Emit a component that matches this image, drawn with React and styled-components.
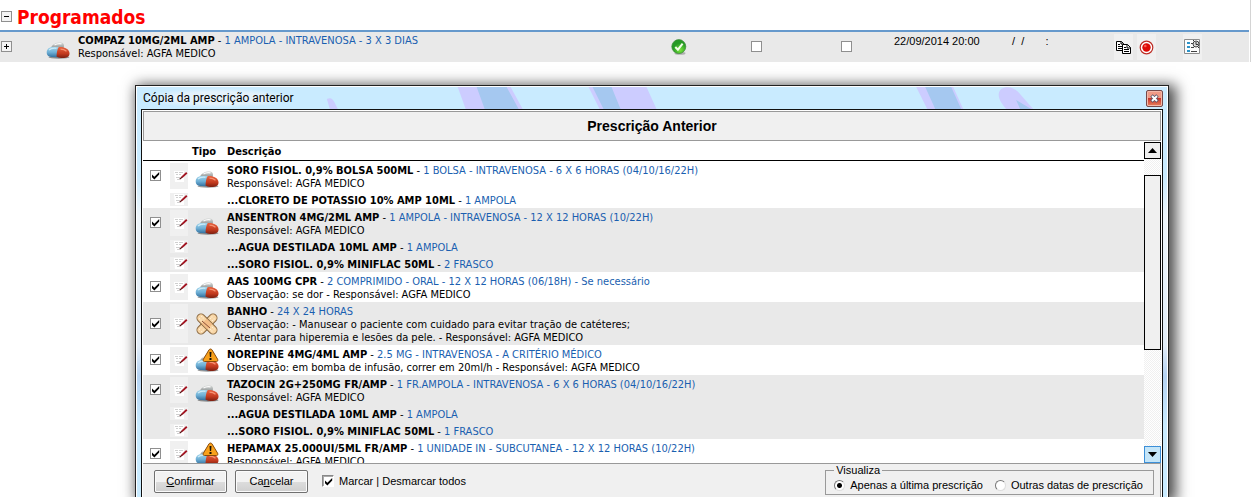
import React, { useState } from 'react';
import styled, { createGlobalStyle, css } from 'styled-components';

const tahoma = '"DejaVu Sans Condensed", "DejaVu Sans", sans-serif';
const msSans = '"Liberation Sans", Arial, sans-serif';
const blue = '#1a5fb0';
const stripe = '#e9e9e9';
const face = '#f0f0f0';

const GlobalStyle = createGlobalStyle`
  * { box-sizing: border-box; }
  body { margin: 0; background: #fff; color: #000; font: 11px/13px ${tahoma}; }
  button, input { margin: 0; padding: 0; font: inherit; color: inherit; }
  svg { display: block; flex: none; }
`;

/* ---------- shared controls ---------- */

const tick = encodeURIComponent(
  '<svg xmlns="http://www.w3.org/2000/svg" viewBox="0 0 9 9"><path d="M1 3.6v2.6l2.4 2.3L8.2 3.5V1L3.4 5.8z"/></svg>'
);

const Check = styled.input.attrs({ type: 'checkbox' })`
  appearance: none;
  display: block;
  flex: none;
  width: ${(p) => (p.$sunken ? 12 : 11)}px;
  height: ${(p) => (p.$sunken ? 12 : 11)}px;
  margin-bottom: 1px;
  background: #fff center / 9px 9px no-repeat;
  border: 1px solid #8f8f8f;
  ${(p) => p.$sunken && css`border-color: #888 #fff #fff #888; box-shadow: inset 1px 1px #aaa;`}
  &:checked { background-image: url("data:image/svg+xml,${tick}"); }
`;

const Radio = styled.input.attrs({ type: 'radio' })`
  appearance: none;
  display: block;
  flex: none;
  width: 11px;
  height: 11px;
  border-radius: 50%;
  border: 1px solid;
  border-color: #777 #ddd #ddd #777;
  background: #fff;
  &:checked { background: radial-gradient(circle, #000 2px, #fff 3px); }
`;

const IconButton = styled.button`
  display: flex;
  align-items: center;
  justify-content: center;
  flex: none;
  width: ${(p) => p.$width || 18}px;
  height: ${(p) => p.$height || 26}px;
  border: 0;
  background: ${face};
`;

/* ---------- icons ---------- */

const Pills = ({ alert }) => (
  <svg width="24" height="24" viewBox="0 0 24 24" aria-hidden="true">
    <defs>
      <linearGradient id="pillBlue" x1="0" y1="0" x2="0" y2="1"><stop offset="0" stopColor="#9fd3ea" /><stop offset=".5" stopColor="#6fb0d6" /><stop offset="1" stopColor="#2f6d9c" /></linearGradient>
      <linearGradient id="pillRed" x1="0" y1="0" x2="0" y2="1"><stop offset="0" stopColor="#e8623f" /><stop offset=".6" stopColor="#c23a1e" /><stop offset="1" stopColor="#7d1f10" /></linearGradient>
      <linearGradient id="pillGrey" x1="0" y1="0" x2="0" y2="1"><stop offset="0" stopColor="#dcdedd" /><stop offset="1" stopColor="#858b8b" /></linearGradient>
    </defs>
    <ellipse cx="13" cy="22.300" rx="10.500" ry="1.500" fill="#000" opacity=".4" />
    <path d="M5 13.500c0-3 4-5.500 8-6.200 3-.5 5.200.9 5 3.700l-.5 3H6z" fill="url(#pillGrey)" />
    <path d="M8.500 10c2-1.300 4.500-1.800 7-1.200" stroke="#fafafa" strokeWidth="1.300" fill="none" />
    <path d="M13 12H6.500C3 12 .7 14.500.7 17.400S3 22 6.500 22l6.500.5z" fill="url(#pillBlue)" />
    <path d="M12.500 12.200c5-.7 11 1.500 11 6.300 0 3.500-3.500 4.500-6.500 4.500-2.500 0-4.800-.5-6.500-1.500.2-3.500.5-6.500 2-9.300z" fill="url(#pillRed)" />
    <path d="M3 15c1.500-1.500 4-2 7.500-1.700" stroke="#cdeaf6" strokeWidth="1.300" fill="none" />
    <path d="M14.500 14.200c2.500 0 4.500.8 6 2" stroke="#f79272" strokeWidth="1.200" fill="none" />
    {alert && (
      <g>
        <path d="M15.500 1c.7 0 1.200.4 1.600 1l5.500 9.200c.7 1.200.2 2.300-1.200 2.300H9.600c-1.400 0-1.900-1.100-1.200-2.300L13.900 2c.4-.6.9-1 1.600-1z" fill="#f9a11b" stroke="#8a4b0a" />
        <path d="M14.500 4h2l-.4 5h-1.200zM14.500 10h2v2h-2z" fill="#1a1205" />
      </g>
    )}
  </svg>
);

const Bandage = () => (
  <svg width="24" height="24" viewBox="0 0 24 24" aria-hidden="true">
    {[-45, 45].map((angle) => (
      <g key={angle} transform={`rotate(${angle} 12 12)`}>
        <rect x="-.5" y="8" width="25" height="8" rx="4" fill="#f8d6a6" stroke="#8a6840" />
        <rect x="8" y="8.500" width="8" height="7" fill="#f3bd86" />
        <path d="M2.500 10.500h4M2.500 13.500h4M18 10.500h4M18 13.500h4" stroke="#fff5e2" strokeDasharray="1 1" />
      </g>
    ))}
    <path d="M7 9l8 7" stroke="#8a5038" />
  </svg>
);

const EditNote = () => (
  <svg width="18" height="13" viewBox="0 0 18 13" aria-hidden="true">
    <path d="M4 1h10v11H5z" fill="#fff" />
    <path d="M5 2.500h3m1 0h4M6 4.500h2m1 0h2M6 7.500h4M7 9.500h3" stroke="#cfcfcf" />
    <path d="M16.800 2.800l-5 4.600" stroke="#a31421" strokeWidth="1.900" />
    <path d="M12 7.200l-2.200 1.800" stroke="#5c1518" strokeWidth="1.300" />
  </svg>
);

const Approved = () => (
  <svg width="16" height="16" viewBox="0 0 16 16" role="img" aria-label="Aprovado">
    <defs><radialGradient id="ok" cx=".6" cy=".75"><stop offset="0" stopColor="#79e63c" /><stop offset="1" stopColor="#269a25" /></radialGradient></defs>
    <ellipse cx="9" cy="14.300" rx="5.500" ry="1.500" fill="#888" opacity=".6" />
    <circle cx="7.800" cy="7.600" r="7" fill="url(#ok)" stroke="#3b8a35" strokeWidth=".7" />
    <path d="M4.300 8l2.600 2.700 4.700-6" fill="none" stroke="#f3ffe9" strokeWidth="2" />
  </svg>
);

const Copy = () => (
  <svg width="17" height="15" viewBox="0 0 17 15" aria-hidden="true" fill="#fff" stroke="#000">
    <path d="M1.500 1.500h5l2 2v7h-7zM6 1.500v2.500h2.500" />
    <path d="M3 4.500h2M3 6.500h4M3 8.500h4" />
    <path d="M7.500 4.500h5l3 3v6h-8zM12 4.500v3.500h3.500" />
    <path d="M9 7.500h2M9 9.500h5M9 11.500h5" />
  </svg>
);

const Record = () => (
  <svg width="15" height="15" viewBox="0 0 15 15" aria-hidden="true">
    <circle cx="7.500" cy="7.500" r="6.300" fill="#fff" stroke="#bd2a22" strokeWidth="1.200" />
    <circle cx="7.500" cy="7.500" r="4.200" fill="#dd0a05" />
    <circle cx="6.300" cy="6" r="1.300" fill="#fa5a50" />
  </svg>
);

const Schedule = () => (
  <svg width="17" height="16" viewBox="0 0 17 16" aria-hidden="true">
    <path d="M.5.500h15v14H.5z" fill="#fdfdfd" stroke="#8c8c8c" />
    <path d="M3 3h3v2H3zM3 7h3v2H3zM3 11h3v2H3z" fill="#2d93c8" />
    <path d="M7 4.500h2M7 8.500h3M7 12.500h6" stroke="#444" />
    <circle cx="12" cy="5" r="3" fill="#ddd" stroke="#444" />
    <path d="M12 3v2.500h2M9 2l1-1M14 8l1 1" stroke="#333" fill="none" />
  </svg>
);

const CloseMark = () => (
  <svg width="9" height="9" viewBox="0 0 9 9" aria-hidden="true">
    <path d="M1.500 1.500l6 6M7.500 1.500l-6 6" stroke="#545469" strokeWidth="3.400" />
    <path d="M2 2l5 5M7 2l-5 5" stroke="#fff" strokeWidth="1.900" />
  </svg>
);

const Arrow = ({ down }) => (
  <svg width="9" height="5" viewBox="0 0 9 5" aria-hidden="true">
    <path d={down ? 'M0 0h9L4.500 5z' : 'M0 5h9L4.500 0z'} />
  </svg>
);

/* ---------- programmed items ---------- */

const Page = styled.main`
  overflow: hidden;
`;

const Programmed = styled.section`
  margin-right: 4px;
  padding-right: 1px;
  border-right: 1px solid #d4d4d4;
`;

const Heading = styled.header`
  display: flex;
  align-items: center;
  gap: 5px;
  padding: 5px 0 1px 1px;
  border-bottom: 2px solid #6699cc;
`;

const HeadingText = styled.h1`
  margin: 0;
  font-size: 19px;
  line-height: 24px;
  color: #f00;
`;

const Toggle = styled.button`
  display: grid;
  place-items: center;
  width: 11px;
  height: 11px;
  margin-bottom: 1px;
  border: 1px solid #8f8f8f;
  background: #f4f4f4;
`;

const Sign = ({ plus }) => (
  <svg width="5" height="5" viewBox="0 0 5 5" aria-hidden="true" stroke="#000">
    <path d={plus ? 'M0 2.500h5M2.500 0v5' : 'M0 2.500h5'} />
  </svg>
);

const ItemRow = styled.div`
  display: grid;
  grid-template-columns: 46px 32px minmax(0, 1fr) 66px 89px 91px 118px 104px 46px 89px;
  align-items: center;
  height: 30px;
  background: ${stripe};
`;

const Cell = styled.div`
  display: flex;
  align-items: center;
  gap: 4px;
  justify-content: ${(p) => (p.$center ? 'center' : 'flex-start')};
  padding-left: ${(p) => p.$indent || 0}px;
`;

const DateText = styled.span`
  align-self: start;
  padding: 3px 0 0 2px;
  font-family: ${msSans};
  white-space: pre;
`;

const Title = styled.strong``;

const Dose = styled.span`
  color: ${blue};
`;

/* ---------- dialog ---------- */

const Stage = styled.div`
  padding: 23px 86px 0 135px;
  overflow: hidden;
`;

const Dialog = styled.section`
  border: 1px solid #222;
  border-bottom: 0;
  padding: 0 1px;
  background: linear-gradient(#c9ebff 90px, #eef5fa 130px, #e2edf8 260px, #b5d3f3 290px, #c9ebff 340px);
  box-shadow: inset 0 1px #fff, inset -1px 0 #fff, inset 1px 0 #fff, 4px 3px 13px 3px rgba(0, 0, 0, 0.7);
`;

const TitleBar = styled.header`
  position: relative;
  display: flex;
  align-items: center;
  justify-content: space-between;
  height: 22px;
  margin-top: 1px;
  padding: 0 4px 0 6px;
  overflow: hidden;
`;

const Streaks = styled.svg`
  position: absolute;
  inset: 0;
  width: 100%;
  height: 100%;
`;

const Caption = styled.h2`
  position: relative;
  margin: 0;
  font: 12px/20px Roboto, "Open Sans", sans-serif;
  background: radial-gradient(closest-side, #e4f2fb 60%, transparent);
`;

const CloseButton = styled.button`
  position: relative;
  display: grid;
  place-items: center;
  width: 17px;
  height: 17px;
  border: 1px solid #75494a;
  border-radius: 2px;
  box-shadow: inset 0 0 0 1px #f3b9aa;
  background: linear-gradient(#f09a86 45%, #c5352b 50%, #e8805c);
`;

const Client = styled.div`
  margin: 0 4px;
  padding: 1px 1px 0;
  border: 1px solid #111;
  border-bottom: 0;
  background: #fff;
`;

const Banner = styled.h3`
  margin: 0;
  border: 1px solid #999;
  background: ${face};
  font: bold 14px/28px ${msSans};
  text-align: center;
`;

const Viewport = styled.div`
  display: flex;
  height: 322px;
`;

const Scrolled = styled.div`
  flex: 1;
  min-width: 0;
  overflow: hidden;
`;

const Table = styled.table`
  width: 100%;
  table-layout: fixed;
  border-spacing: 0;
`;

const HeadCell = styled.th`
  height: 20px;
  width: ${(p) => (p.$width ? `${p.$width}px` : 'auto')};
  padding: 4px 0 2px ${(p) => p.$indent || 0}px;
  border-bottom: 1px solid #000;
  text-align: left;
`;

const Row = styled.tr`
  background: ${(p) => (p.$shaded ? stripe : '#fff')};
`;

const DataCell = styled.td`
  padding: 2px 0;
  vertical-align: middle;
  & > * { margin-left: auto; margin-right: auto; }
`;

const TextCell = styled.td`
  padding: 3px 0 1px 3px;
  white-space: nowrap;
`;

const ScrollBar = styled.div`
  display: flex;
  flex-direction: column;
  width: 17px;
  margin-top: 1px;
  background: repeating-conic-gradient(#fff 0 25%, #f0f0f0 0 50%) 0 0 / 2px 2px;
`;

const ScrollButton = styled.button`
  display: grid;
  place-items: center;
  height: 17px;
  border: 1px solid ${(p) => (p.$active ? '#3c8fd8' : '#000')};
  background: ${(p) => (p.$active ? '#c4e5f8' : face)};
`;

const Track = styled.div`
  flex: 1;
  padding-top: 16px;
`;

const Thumb = styled.div`
  height: 175px;
  border: 1px solid #000;
  background: ${face};
`;

const Footer = styled.footer`
  display: flex;
  align-items: flex-start;
  justify-content: space-between;
  padding: 0 6px 2px 11px;
  border-top: 1px solid #999;
  border-right: 1px solid #999;
  background: ${face};
  font: 11px/13px ${msSans};
`;

const Actions = styled.div`
  display: flex;
  align-items: center;
  gap: 8px;
  padding-top: 6px;
`;

const PushButton = styled.button`
  width: 73px;
  height: 23px;
  border: 1px solid #707070;
  border-radius: 2px;
  box-shadow: inset 0 0 0 1px #fbfbfb;
  background: linear-gradient(#f2f2f2 50%, #dddddd 50%, #cfcfcf);
`;

const Option = styled.label`
  display: flex;
  align-items: center;
  gap: 5px;
`;

const AllOption = styled(Option)`
  margin-left: 6px;
`;

const ViewGroup = styled.fieldset`
  display: flex;
  align-items: center;
  gap: 12px;
  height: 31px;
  margin: 0;
  padding: 0 10px 0 8px;
  border: 1px solid #999;
`;

const Legend = styled.legend`
  padding: 0 2px;
  line-height: 12px;
`;

const rows = [
  { name: 'SORO FISIOL. 0,9% BOLSA 500ML', dose: '1 BOLSA - INTRAVENOSA - 6 X 6 HORAS (04/10/16/22H)', notes: ['Responsável: AGFA MEDICO'], icon: 'pills' },
  { name: '...CLORETO DE POTASSIO 10% AMP 10ML', dose: '1 AMPOLA' },
  { name: 'ANSENTRON 4MG/2ML AMP', dose: '1 AMPOLA - INTRAVENOSA - 12 X 12 HORAS (10/22H)', notes: ['Responsável: AGFA MEDICO'], icon: 'pills', shaded: true },
  { name: '...AGUA DESTILADA 10ML AMP', dose: '1 AMPOLA', shaded: true },
  { name: '...SORO FISIOL. 0,9% MINIFLAC 50ML', dose: '2 FRASCO', shaded: true },
  { name: 'AAS 100MG CPR', dose: '2 COMPRIMIDO - ORAL - 12 X 12 HORAS (06/18H) - Se necessário', notes: ['Observação: se dor - Responsável: AGFA MEDICO'], icon: 'pills' },
  {
    name: 'BANHO',
    dose: '24 X 24 HORAS',
    notes: ['Observação: - Manusear o paciente com cuidado para evitar tração de catéteres;', '- Atentar para hiperemia e lesões da pele. - Responsável: AGFA MEDICO'],
    icon: 'bandage',
    shaded: true,
  },
  { name: 'NOREPINE 4MG/4ML AMP', dose: '2.5 MG - INTRAVENOSA - A CRITÉRIO MÉDICO', notes: ['Observação: em bomba de infusão, correr em 20ml/h - Responsável: AGFA MEDICO'], icon: 'alert' },
  { name: 'TAZOCIN 2G+250MG FR/AMP', dose: '1 FR.AMPOLA - INTRAVENOSA - 6 X 6 HORAS (04/10/16/22H)', notes: ['Responsável: AGFA MEDICO'], icon: 'pills', shaded: true },
  { name: '...AGUA DESTILADA 10ML AMP', dose: '1 AMPOLA', shaded: true },
  { name: '...SORO FISIOL. 0,9% MINIFLAC 50ML', dose: '1 FRASCO', shaded: true },
  { name: 'HEPAMAX 25.000UI/5ML FR/AMP', dose: '1 UNIDADE IN - SUBCUTANEA - 12 X 12 HORAS (10/22H)', notes: ['Responsável: AGFA MEDICO'], icon: 'alert' },
];

function PrescriptionRow({ item, checked, onToggle }) {
  const notes = item.notes || [];
  return (
    <Row $shaded={item.shaded}>
      <DataCell>{item.icon && <Check checked={checked} onChange={onToggle} aria-label={item.name} />}</DataCell>
      <DataCell>
        <IconButton $height={13 * (notes.length + 1)} aria-label={`Editar ${item.name}`}><EditNote /></IconButton>
      </DataCell>
      <DataCell>
        {item.icon === 'bandage' && <Bandage />}
        {(item.icon === 'pills' || item.icon === 'alert') && <Pills alert={item.icon === 'alert'} />}
      </DataCell>
      <TextCell>
        <Title>{item.name}</Title> - <Dose>{item.dose}</Dose>
        {notes.map((note) => <div key={note}>{note}</div>)}
      </TextCell>
    </Row>
  );
}

export default function App() {
  const [checked, setChecked] = useState(() => rows.map(() => true));
  const [view, setView] = useState('last');
  const toggle = (index) => setChecked((all) => all.map((on, i) => (i === index ? !on : on)));
  const allOn = checked.every(Boolean);

  return (
    <Page>
      <GlobalStyle />
      <Programmed>
        <Heading>
          <Toggle aria-label="Recolher"><Sign /></Toggle>
          <HeadingText>Programados</HeadingText>
        </Heading>
        <ItemRow>
          <Cell $indent={1}><Toggle aria-label="Expandir"><Sign plus /></Toggle></Cell>
          <Cell><Pills /></Cell>
          <div>
            <Title>COMPAZ 10MG/2ML AMP</Title> - <Dose>1 AMPOLA - INTRAVENOSA - 3 X 3 DIAS</Dose>
            <div>Responsável: AGFA MEDICO</div>
          </div>
          <Cell $center><Approved /></Cell>
          <Cell $center><Check aria-label="Se necessário" /></Cell>
          <Cell $center><Check aria-label="A critério médico" /></Cell>
          <DateText>22/09/2014 20:00</DateText>
          <DateText>{'/  /       :'}</DateText>
          <Cell>
            <IconButton $width={19} aria-label="Copiar"><Copy /></IconButton>
            <IconButton $width={19} aria-label="Suspender"><Record /></IconButton>
          </Cell>
          <Cell $indent={23}>
            <IconButton $width={19} aria-label="Horários"><Schedule /></IconButton>
          </Cell>
        </ItemRow>
      </Programmed>

      <Stage>
        <Dialog role="dialog" aria-label="Cópia da prescrição anterior">
          <TitleBar>
            <Streaks viewBox="0 0 1031 22" preserveAspectRatio="none" aria-hidden="true">
              <path d="M321 0h53l12 22h-57z M452 0h58l10 22h-57z M780 0h37l10 22h-36z M865 2c6-4 14-1 18 4l14 16h-27c-7-8-10-15-5-20z M190 12c4-2 6 0 8 4l3 6h-8z" fill="#ccccff" />
              <path d="M340 0h30l12 22h-34z M456 0h19l9 22h-17z M789 0h26l10 22h-26z M880 13l15 9h-11z" fill="#a5c8f0" />
            </Streaks>
            <Caption>Cópia da prescrição anterior</Caption>
            <CloseButton aria-label="Fechar"><CloseMark /></CloseButton>
          </TitleBar>
          <Client>
            <Banner>Prescrição Anterior</Banner>
            <Viewport>
              <Scrolled>
                <Table>
                  <thead>
                    <tr>
                      <HeadCell $width={25} aria-label="Selecionar" />
                      <HeadCell $width={22} aria-label="Editar" />
                      <HeadCell $width={34} $indent={2}>Tipo</HeadCell>
                      <HeadCell $indent={3}>Descrição</HeadCell>
                    </tr>
                  </thead>
                  <tbody>
                    {rows.map((item, i) => (
                      <PrescriptionRow key={i} item={item} checked={checked[i]} onToggle={() => toggle(i)} />
                    ))}
                  </tbody>
                </Table>
              </Scrolled>
              <ScrollBar>
                <ScrollButton aria-label="Rolar para cima"><Arrow /></ScrollButton>
                <Track><Thumb /></Track>
                <ScrollButton $active aria-label="Rolar para baixo"><Arrow down /></ScrollButton>
              </ScrollBar>
            </Viewport>
            <Footer>
              <Actions>
                <PushButton><u>C</u>onfirmar</PushButton>
                <PushButton>Ca<u>n</u>celar</PushButton>
                <AllOption>
                  <Check $sunken checked={allOn} onChange={() => setChecked(rows.map(() => !allOn))} />
                  Marcar | Desmarcar todos
                </AllOption>
              </Actions>
              <ViewGroup>
                <Legend>Visualiza</Legend>
                <Option>
                  <Radio name="view" checked={view === 'last'} onChange={() => setView('last')} />
                  Apenas a última prescrição
                </Option>
                <Option>
                  <Radio name="view" checked={view === 'other'} onChange={() => setView('other')} />
                  Outras datas de prescrição
                </Option>
              </ViewGroup>
            </Footer>
          </Client>
        </Dialog>
      </Stage>
    </Page>
  );
}
